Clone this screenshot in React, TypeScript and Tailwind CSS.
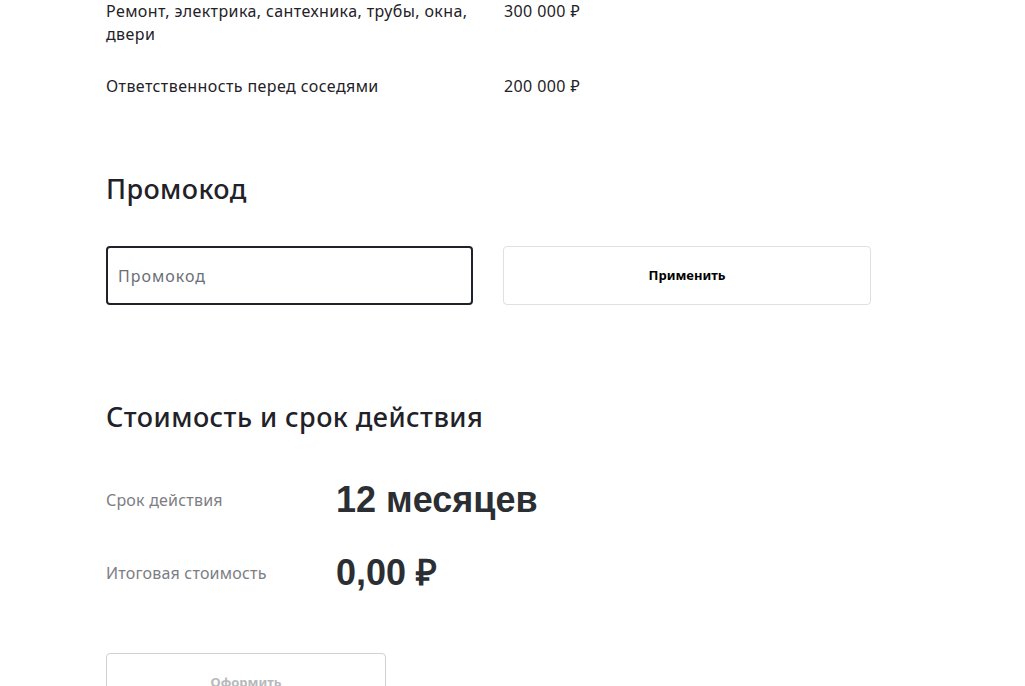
const rows = [
  { name: "Ремонт, электрика, сантехника, трубы, окна, двери", sum: "300 000 ₽" },
  { name: "Ответственность перед соседями", sum: "200 000 ₽" },
];

const App = () => {
  return (
    <div className="w-full min-h-[686px] bg-white text-[#1f2228] font-['Noto_Sans',sans-serif] pl-[106px] overflow-hidden">
      <div className="w-[765px] flex flex-col">
        <div className="flex flex-col gap-[29px]">
          {rows.map((r) => (
            <div key={r.sum} className="grid grid-cols-[368px_1fr] gap-[30px] text-[16px] leading-[23px] tracking-[0.4px]">
              <span>{r.name}</span>
              <span>{r.sum}</span>
            </div>
          ))}
        </div>

        <h2 className="mt-[75px] text-[27px] leading-[32px] font-medium tracking-[0.4px]">Промокод</h2>
        <div className="mt-[41px] grid grid-cols-[367px_368px] gap-[30px]">
          <input
            placeholder="Промокод"
            className="h-[59px] border-2 border-[#1f2228] rounded-[4px] px-[10px] text-[16px] tracking-[1px] placeholder:text-[#6b6e75] outline-none"
          />
          <button className="h-[59px] border border-[#e0e0e0] rounded-[4px] bg-white text-[13px] font-bold text-black">
            Применить
          </button>
        </div>

        <h2 className="mt-[96px] text-[27px] leading-[32px] font-medium tracking-[0.45px]">Стоимость и срок действия</h2>
        <div className="mt-[47px] flex flex-col gap-[33px]">
          <div className="flex items-center h-[40px]">
            <span className="w-[230px] text-[16px] tracking-[0.2px] text-[#7c7e83]">Срок действия</span>
            <span className="font-['Liberation_Sans',sans-serif] font-bold text-[36px] text-[#2b2f33]">12 месяцев</span>
          </div>
          <div className="flex items-center h-[40px]">
            <span className="w-[230px] text-[16px] tracking-[0.2px] text-[#7c7e83]">Итоговая стоимость</span>
            <span className="font-['Liberation_Sans',sans-serif] font-bold text-[36px] text-[#2b2f33]">0,00 ₽</span>
          </div>
        </div>

        <button className="mt-[60px] w-[280px] h-[58px] border border-[#cfd0d2] rounded-[4px] bg-white text-[13px] font-bold text-[#b8b9bc] flex items-start justify-center pt-[19px]">
          Оформить
        </button>
      </div>
    </div>
  );
};

export default App;
